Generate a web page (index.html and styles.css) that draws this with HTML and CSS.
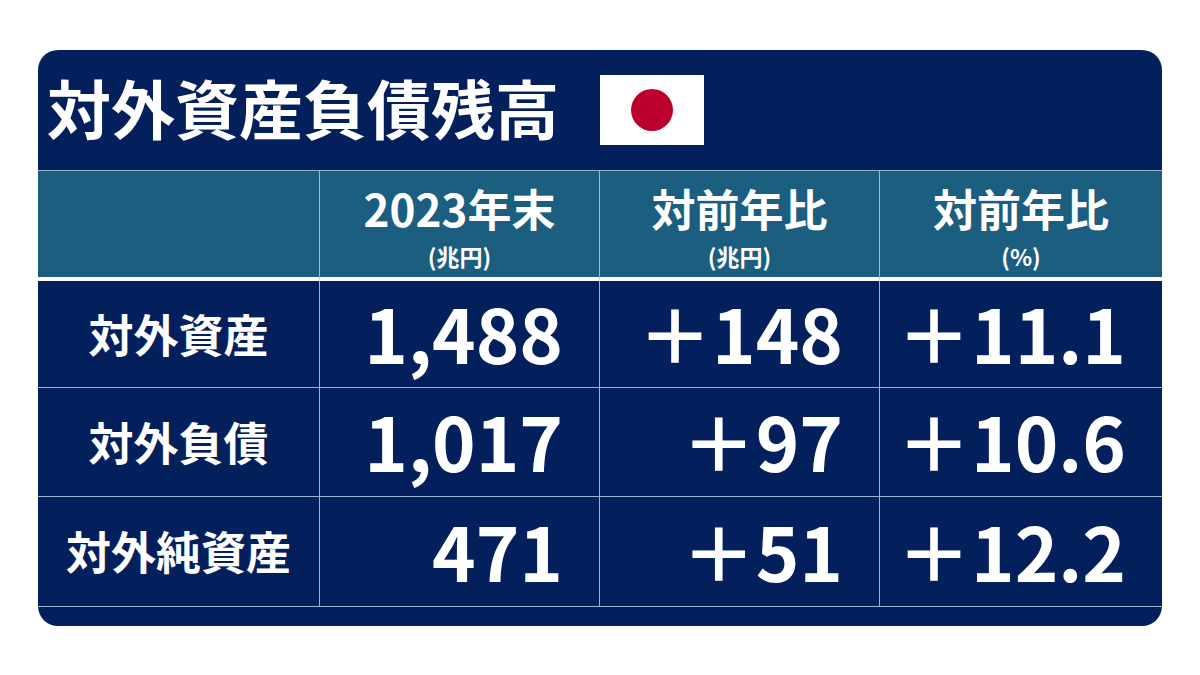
FILE: index.html
```html
<!DOCTYPE html>
<html lang="ja">
<head>
<meta charset="utf-8">
<link rel="stylesheet" href="styles.css">
</head>
<body>
<div class="card">
  <div class="title-bar">
    <h1 class="title">対外資産負債残高</h1>
    <div class="flag"><span class="sun"></span></div>
  </div>
  <div class="table">
    <div class="hcell"></div>
    <div class="hcell"><div class="hmain">2023年末</div><div class="hsub">(兆円)</div></div>
    <div class="hcell"><div class="hmain">対前年比</div><div class="hsub">(兆円)</div></div>
    <div class="hcell last"><div class="hmain">対前年比</div><div class="hsub">(%)</div></div>

    <div class="cell label">対外資産</div>
    <div class="cell num">1,488</div>
    <div class="cell num">＋148</div>
    <div class="cell num last">＋11.1</div>

    <div class="cell label">対外負債</div>
    <div class="cell num">1,017</div>
    <div class="cell num">＋97</div>
    <div class="cell num last">＋10.6</div>

    <div class="cell label">対外純資産</div>
    <div class="cell num">471</div>
    <div class="cell num">＋51</div>
    <div class="cell num last">＋12.2</div>
  </div>
</div>
</body>
</html>
```

FILE: styles.css
```css
html, body {
  margin: 0;
  padding: 0;
  background: #ffffff;
}

body {
  font-family: "Noto Sans CJK JP", "Noto Sans", sans-serif;
  color: #ffffff;
}

.card {
  box-sizing: border-box;
  width: 1124px;
  height: 576px;
  margin: 50px 0 0 38px;
  background: #04205c;
  border-radius: 20px;
  overflow: hidden;
}

.title-bar {
  box-sizing: border-box;
  height: 120px;
  display: flex;
  align-items: center;
  padding-left: 9px;
}

.title {
  margin: 0 0 8px 0;
  font-size: 64px;
  font-weight: 700;
  line-height: 1;
  letter-spacing: 0;
}

.flag {
  width: 104px;
  height: 70px;
  margin-left: 41px;
  background: #ffffff;
  display: flex;
  align-items: center;
  justify-content: center;
}

.sun {
  width: 42px;
  height: 42px;
  border-radius: 50%;
  background: #bc002d;
}

.table {
  display: grid;
  grid-template-columns: 282px 280px 280px 282px;
  grid-template-rows: 111px 107px 109px 109px;
  border-bottom: 1px solid #9fb2cf;
}

.hcell {
  background: #1b5e80;
  border-top: 1px solid #8fb3cb;
  border-right: 1px solid #9fbad0;
  border-bottom: 4px solid #ffffff;
  display: flex;
  flex-direction: column;
  align-items: center;
  justify-content: flex-start;
  padding-top: 15px;
}

.hmain {
  font-size: 44px;
  font-weight: 700;
  line-height: 1;
}

.hsub {
  font-size: 23px;
  font-weight: 700;
  line-height: 1;
  margin-top: 15px;
}

.cell {
  border-right: 1px solid #9fb2cf;
  border-bottom: 1px solid #9fb2cf;
  display: flex;
  align-items: center;
  font-weight: 700;
}

.table .cell:nth-last-child(-n+4) {
  border-bottom: none;
}

.last {
  border-right: none;
}

.label {
  justify-content: center;
  font-size: 45px;
  padding-bottom: 2px;
}

.num {
  justify-content: flex-end;
  padding-right: 36px;
  font-size: 74px;
  line-height: 1;
  padding-bottom: 4px;
}
```
